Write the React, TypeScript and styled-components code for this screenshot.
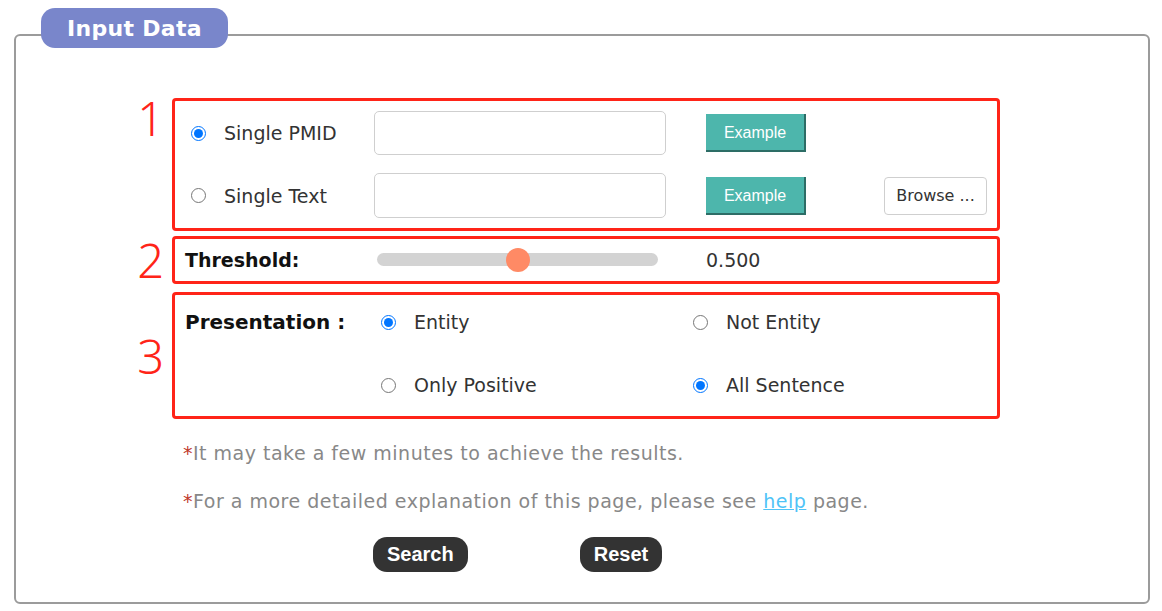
import styled, { createGlobalStyle } from 'styled-components';

const GlobalStyle = createGlobalStyle`
  body {
    margin: 0;
    background: #fff;
    font-family: 'DejaVu Sans', Verdana, sans-serif;
    color: #333;
  }
`;

const Frame = styled.section`
  position: relative;
  box-sizing: border-box;
  margin: 34px 0 0 14px;
  width: 1136px;
  height: 570px;
  border: 2px solid #9b9b9b;
  border-radius: 6px;
  padding-top: 62px;
`;

const Legend = styled.div`
  position: absolute;
  top: -28px;
  left: 25px;
  width: 187px;
  height: 40px;
  border-radius: 14px;
  background: #7986cb;
  color: #fff;
  font-size: 22px;
  font-weight: 700;
  letter-spacing: 0.3px;
  display: flex;
  align-items: center;
  justify-content: center;
`;

const Step = styled.div<{ $gap: number }>`
  display: grid;
  grid-template-columns: 156px 828px;
  margin-top: ${(p) => p.$gap}px;
`;

const StepNumber = styled.div<{ $top?: boolean }>`
  color: #ff2418;
  font-family: 'Noto Sans', 'Liberation Sans', sans-serif;
  font-weight: 300;
  font-size: 47px;
  line-height: 48px;
  text-align: right;
  padding-right: 8px;
  align-self: ${(p) => (p.$top ? 'start' : 'center')};
  margin-top: ${(p) => (p.$top ? '-4px' : '0')};
`;

const Box = styled.div`
  box-sizing: border-box;
  border: 3px solid #ff2418;
  border-radius: 4px;
`;

const SourceGrid = styled.div`
  display: grid;
  grid-template-columns: 183px 332px 178px 103px;
  grid-template-rows: 44px 45px;
  row-gap: 18px;
  align-items: center;
  padding: 10px 0 10px 16px;
`;

const Option = styled.label`
  display: flex;
  align-items: center;
  gap: 18px;
  font-size: 19px;
  color: #333;
`;

const Radio = styled.input`
  width: 15px;
  height: 15px;
  margin: 0;
  accent-color: #0075ff;
`;

const TextInput = styled.input`
  box-sizing: border-box;
  width: 292px;
  height: 100%;
  border: 1px solid #cfcfcf;
  border-radius: 5px;
  background: #fff;
`;

const ExampleButton = styled.button`
  box-sizing: border-box;
  width: 100px;
  height: 38px;
  border: none;
  border-right: 2px solid #2d6d66;
  border-bottom: 2px solid #2d6d66;
  background: #4db6ac;
  color: #fff;
  font-family: 'Liberation Sans', Arial, sans-serif;
  font-size: 16px;
  padding: 2px 0 0;
`;

const BrowseButton = styled.button`
  box-sizing: border-box;
  width: 103px;
  height: 38px;
  border: 1px solid #cfcfcf;
  border-radius: 4px;
  background: #fff;
  color: #333;
  font-family: 'DejaVu Sans', Verdana, sans-serif;
  font-size: 16px;
  padding: 0;
`;

const ThresholdRow = styled.div`
  box-sizing: border-box;
  height: 41px;
  display: grid;
  grid-template-columns: 192px 329px auto;
  align-items: center;
  padding-left: 10px;
`;

const FieldLabel = styled.span<{ $size: number }>`
  font-weight: 700;
  font-size: ${(p) => p.$size}px;
  color: #111;
`;

const Slider = styled.input`
  -webkit-appearance: none;
  appearance: none;
  width: 281px;
  height: 13px;
  margin: 0;
  border-radius: 7px;
  background: #d3d3d3;
  outline: none;

  &::-webkit-slider-thumb {
    -webkit-appearance: none;
    appearance: none;
    width: 24px;
    height: 24px;
    border-radius: 50%;
    background: #ff8a65;
    border: none;
  }
`;

const Value = styled.span`
  font-size: 19px;
  color: #333;
`;

const PresentationGrid = styled.div`
  display: grid;
  grid-template-columns: 196px 312px auto;
  grid-template-rows: 24px 24px;
  row-gap: 39px;
  align-items: center;
  padding: 15px 0 19px 10px;
`;

const Notes = styled.div`
  margin: 10px 0 0 167px;
`;

const Note = styled.p`
  margin: 0;
  line-height: 48px;
  font-size: 19px;
  letter-spacing: 0.5px;
  color: #888;
`;

const Star = styled.span`
  color: #c0392b;
`;

const HelpLink = styled.a`
  color: #4fc3f7;
  text-decoration: underline;
`;

const Actions = styled.div`
  display: flex;
  gap: 112px;
  margin: 12px 0 0 357px;
`;

const ActionButton = styled.button`
  height: 35px;
  padding: 0 14px;
  border: none;
  border-radius: 14px;
  background: #333;
  color: #fff;
  font-family: 'Liberation Sans', Arial, sans-serif;
  font-weight: 700;
  font-size: 20px;
`;

export default function App() {
  return (
    <>
      <GlobalStyle />
      <Frame>
        <Legend>Input Data</Legend>

        <Step $gap={0}>
          <StepNumber $top>1</StepNumber>
          <Box>
            <SourceGrid>
              <Option>
                <Radio type="radio" name="source" defaultChecked />
                Single PMID
              </Option>
              <TextInput type="text" />
              <ExampleButton type="button">Example</ExampleButton>
              <span />
              <Option>
                <Radio type="radio" name="source" />
                Single Text
              </Option>
              <TextInput type="text" />
              <ExampleButton type="button">Example</ExampleButton>
              <BrowseButton type="button">Browse ...</BrowseButton>
            </SourceGrid>
          </Box>
        </Step>

        <Step $gap={5}>
          <StepNumber>2</StepNumber>
          <Box>
            <ThresholdRow>
              <FieldLabel $size={19}>Threshold:</FieldLabel>
              <Slider type="range" min={0} max={1} step={0.001} defaultValue={0.5} />
              <Value>0.500</Value>
            </ThresholdRow>
          </Box>
        </Step>

        <Step $gap={8}>
          <StepNumber>3</StepNumber>
          <Box>
            <PresentationGrid>
              <FieldLabel $size={20}>Presentation :</FieldLabel>
              <Option>
                <Radio type="radio" name="entity" defaultChecked />
                Entity
              </Option>
              <Option>
                <Radio type="radio" name="entity" />
                Not Entity
              </Option>
              <span />
              <Option>
                <Radio type="radio" name="scope" />
                Only Positive
              </Option>
              <Option>
                <Radio type="radio" name="scope" defaultChecked />
                All Sentence
              </Option>
            </PresentationGrid>
          </Box>
        </Step>

        <Notes>
          <Note>
            <Star>*</Star>It may take a few minutes to achieve the results.
          </Note>
          <Note>
            <Star>*</Star>For a more detailed explanation of this page, please see{' '}
            <HelpLink href="#help">help</HelpLink> page.
          </Note>
        </Notes>

        <Actions>
          <ActionButton type="button">Search</ActionButton>
          <ActionButton type="button">Reset</ActionButton>
        </Actions>
      </Frame>
    </>
  );
}
